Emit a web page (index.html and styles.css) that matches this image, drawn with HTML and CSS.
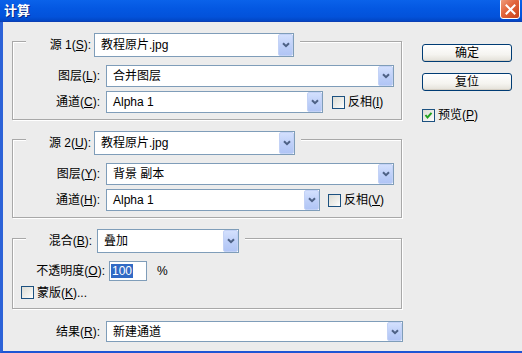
FILE: index.html
```html
<!DOCTYPE html>
<html lang="zh-CN">
<head>
<meta charset="utf-8">
<title>计算</title>
<link rel="stylesheet" href="styles.css">
</head>
<body>
<div class="window">
  <div class="titlebar">
    <span class="title">计算</span>
    <span class="close"><svg width="11" height="11" viewBox="0 0 11 11"><path d="M1.5 1.5 L9.5 9.5 M9.5 1.5 L1.5 9.5" stroke="#fff" stroke-width="2" stroke-linecap="square"/></svg></span>
  </div>
  <div class="client">
    <div class="main">
      <fieldset class="group g1">
        <legend><div class="lg">
          <span class="lab lw-src">源 1(<u>S</u>):</span>
          <div class="popup big pw-src1"><span class="val">教程原片.jpg</span><span class="arrow"><svg width="8" height="6" viewBox="0 0 8 6"><path d="M1 1.2 L4 4.2 L7 1.2" fill="none" stroke="#4d6185" stroke-width="2"/></svg></span></div>
        </div></legend>
        <div class="row first">
          <span class="lab lw-row">图层(<u>L</u>):</span>
          <div class="popup pw-layer"><span class="val">合并图层</span><span class="arrow"><svg width="8" height="6" viewBox="0 0 8 6"><path d="M1 1.2 L4 4.2 L7 1.2" fill="none" stroke="#4d6185" stroke-width="2"/></svg></span></div>
        </div>
        <div class="row">
          <span class="lab lw-row">通道(<u>C</u>):</span>
          <div class="popup pw-ch1"><span class="val">Alpha 1</span><span class="arrow"><svg width="8" height="6" viewBox="0 0 8 6"><path d="M1 1.2 L4 4.2 L7 1.2" fill="none" stroke="#4d6185" stroke-width="2"/></svg></span></div>
          <span class="check inv1"></span><span class="clab">反相(<u>I</u>)</span>
        </div>
      </fieldset>

      <fieldset class="group g2">
        <legend><div class="lg">
          <span class="lab lw-src">源 2(<u>U</u>):</span>
          <div class="popup big pw-src2"><span class="val">教程原片.jpg</span><span class="arrow"><svg width="8" height="6" viewBox="0 0 8 6"><path d="M1 1.2 L4 4.2 L7 1.2" fill="none" stroke="#4d6185" stroke-width="2"/></svg></span></div>
        </div></legend>
        <div class="row first">
          <span class="lab lw-row">图层(<u>Y</u>):</span>
          <div class="popup pw-layer"><span class="val">背景 副本</span><span class="arrow"><svg width="8" height="6" viewBox="0 0 8 6"><path d="M1 1.2 L4 4.2 L7 1.2" fill="none" stroke="#4d6185" stroke-width="2"/></svg></span></div>
        </div>
        <div class="row">
          <span class="lab lw-row">通道(<u>H</u>):</span>
          <div class="popup pw-ch2"><span class="val">Alpha 1</span><span class="arrow"><svg width="8" height="6" viewBox="0 0 8 6"><path d="M1 1.2 L4 4.2 L7 1.2" fill="none" stroke="#4d6185" stroke-width="2"/></svg></span></div>
          <span class="check inv2"></span><span class="clab">反相(<u>V</u>)</span>
        </div>
      </fieldset>

      <fieldset class="group g3">
        <legend class="lg3"><div class="lg">
          <span class="lab lw-blend">混合(<u>B</u>):</span>
          <div class="popup big pw-blend"><span class="val">叠加</span><span class="arrow"><svg width="8" height="6" viewBox="0 0 8 6"><path d="M1 1.2 L4 4.2 L7 1.2" fill="none" stroke="#4d6185" stroke-width="2"/></svg></span></div>
        </div></legend>
        <div class="row first opacity">
          <span class="lab lw-op">不透明度(<u>O</u>):</span>
          <div class="field"><span class="sel">100</span></div>
          <span class="pct">%</span>
        </div>
        <div class="row mask">
          <span class="check maskbox"></span><span class="clab">蒙版(<u>K</u>)...</span>
        </div>
      </fieldset>

      <div class="row result">
        <span class="lab lw-res">结果(<u>R</u>):</span>
        <div class="popup pw-res"><span class="val">新建通道</span><span class="arrow"><svg width="8" height="6" viewBox="0 0 8 6"><path d="M1 1.2 L4 4.2 L7 1.2" fill="none" stroke="#4d6185" stroke-width="2"/></svg></span></div>
      </div>
    </div>

    <div class="side">
      <div class="btn">确定</div>
      <div class="btn">复位</div>
      <div class="prev">
        <span class="check on"><svg width="11" height="11" viewBox="0 0 11 11"><path d="M2.5 5 L4.5 7.5 L8.5 2.8" fill="none" stroke="#21a121" stroke-width="2"/></svg></span>
        <span class="clab">预览(<u>P</u>)</span>
      </div>
    </div>
  </div>
</div>
</body>
</html>
```

FILE: styles.css
```css
* { box-sizing: border-box; }
html, body { margin: 0; padding: 0; }
body {
  background: #ececec;
  font-family: "Liberation Sans", "Noto Sans CJK SC", sans-serif;
  font-size: 12px;
  color: #000;
  overflow: hidden;
}
u { text-decoration: underline; text-underline-offset: 1px; }

.window {
  width: 522px;
  height: 353px;
  display: flex;
  flex-direction: column;
}

.titlebar {
  height: 22px;
  flex: none;
  display: flex;
  align-items: flex-start;
  justify-content: space-between;
  padding-left: 4px;
  background: linear-gradient(#0a62ea 0%, #0458e2 40%, #0352da 80%, #0246c4 100%);
  border-bottom: 1px solid #0b3fb5;
}
.title {
  color: #fff;
  font-family: "Noto Sans CJK SC", sans-serif;
  font-weight: bold;
  font-size: 13px;
  line-height: 18px;
  margin-top: 1px;
  text-shadow: 1px 1px 0 #0a2a8a;
}
.close {
  width: 20px;
  height: 21px;
  margin-top: -2px;
  margin-right: 2px;
  border: 1px solid #fff;
  border-radius: 3px;
  background: linear-gradient(135deg, #f0a080 0%, #e2653c 45%, #c8421c 100%);
  display: flex;
  align-items: center;
  justify-content: center;
  padding-top: 2px;
}

.client {
  flex: 1;
  display: flex;
  border-left: 3px solid #2c62d8;
  border-bottom: 2px solid #1d55d4;
}

.main {
  padding-left: 9px;
  padding-top: 3px;
  width: 400px;
  flex: none;
}

.group {
  margin: 0;
  padding: 0 0 6px 0;
  width: 390px;
  min-width: 0;
  border: 1px solid #a8a8a8;
  box-shadow: 1px 1px 0 #fff, inset 1px 1px 0 #fff;
}
.g2 { margin-top: 3px; }
.g3 { margin-top: 5px; padding-bottom: 8px; }

legend {
  margin-left: 13px;
  padding: 8px 6px 0 0;
  background: #ececec;
}
.lg3 { padding-top: 6px; }
.lg {
  display: flex;
  align-items: center;
}

.lab {
  text-align: right;
  white-space: nowrap;
  line-height: 16px;
  flex: none;
}
.lw-src { width: 65px; margin-right: 3px; }
.lw-row { width: 87px; margin-right: 6px; }
.lw-blend { width: 66px; margin-right: 5px; }
.lw-op { width: 92px; margin-right: 4px; }
.lw-res { width: 88px; margin-right: 6px; }

.row {
  display: flex;
  align-items: center;
  height: 22px;
  margin-top: 4px;
}
.row.first { margin-top: 8px; }
.row.opacity { height: 20px; }
.row.mask { height: 15px; margin-top: 4px; }
.row.result { margin-top: 12px; height: 21px; }

.popup {
  height: 22px;
  display: flex;
  align-items: center;
  background: #fff;
  border: 1px solid #7f9db9;
  padding-left: 6px;
  flex: none;
}
.popup.big { height: 24px; }
.row.result .popup { height: 21px; }
.val {
  line-height: 16px;
  white-space: nowrap;
}
.arrow {
  width: 15px;
  align-self: stretch;
  margin: 0 0 0 auto;
  background: linear-gradient(#d3e0fd, #bccef8 60%, #b1c5f5);
  border: 1px solid #c3d2f6;
  border-radius: 2px;
  display: flex;
  align-items: center;
  justify-content: center;
}
.pw-src1 { width: 200px; }
.pw-src2 { width: 201px; }
.pw-layer { width: 288px; }
.pw-ch1 { width: 217px; }
.pw-ch2 { width: 214px; }
.pw-blend { width: 142px; }
.pw-res { width: 297px; }

.check {
  width: 13px;
  height: 13px;
  flex: none;
  border: 1px solid #1c5180;
  background: linear-gradient(135deg, #dcdcd5 0%, #f2f2ef 70%, #fff 100%);
  display: inline-flex;
  align-items: center;
  justify-content: center;
}
.inv1 { margin-left: 9px; }
.inv2 { margin-left: 8px; }
.maskbox { margin-left: 8px; }
.clab {
  margin-left: 3px;
  line-height: 16px;
  white-space: nowrap;
}

.field {
  width: 38px;
  height: 20px;
  border: 1px solid #7f9db9;
  background: #fff;
  display: flex;
  align-items: center;
  padding-left: 1px;
}
.sel {
  background: #316ac5;
  color: #fff;
  line-height: 14px;
  padding: 0 1px;
}
.pct { margin-left: 10px; line-height: 16px; }

.side {
  margin-left: 19px;
  padding-top: 22px;
  display: flex;
  flex-direction: column;
}
.btn {
  width: 90px;
  height: 18px;
  margin-bottom: 11px;
  border: 1px solid #003c74;
  border-radius: 3px;
  background: linear-gradient(#ffffff 0%, #f5f4f0 60%, #e3e0d8 100%);
  box-shadow: inset 0 -1px 0 #d6d0c5;
  display: flex;
  align-items: center;
  justify-content: center;
  line-height: 16px;
}
.prev {
  display: flex;
  align-items: center;
  margin-top: 5px;
}
```
